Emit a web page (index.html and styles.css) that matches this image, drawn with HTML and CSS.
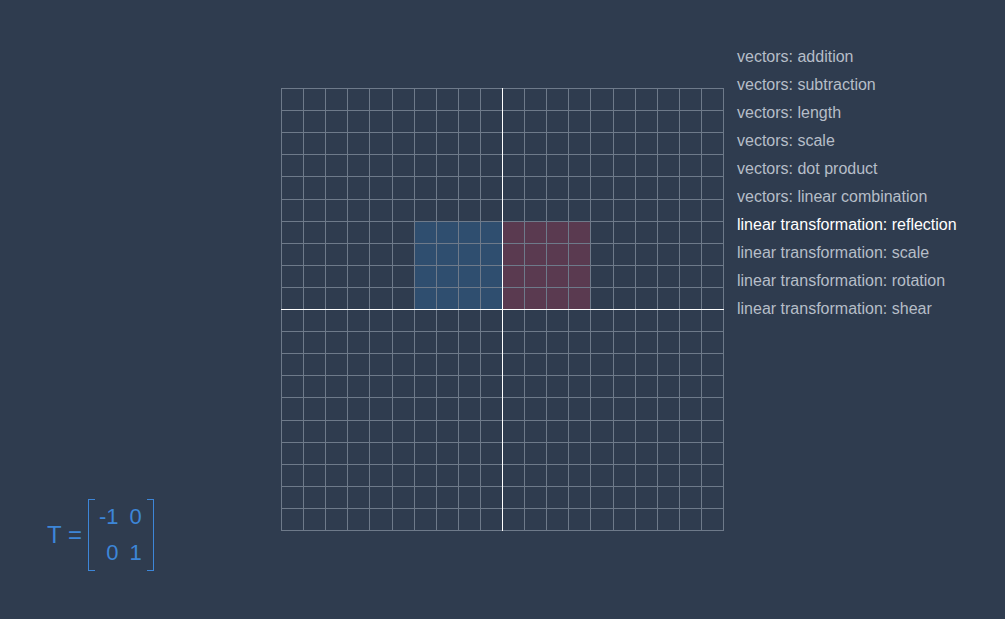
FILE: index.html
```html
<!DOCTYPE html>
<html>
<head>
<meta charset="utf-8">
<link rel="stylesheet" href="styles.css">
</head>
<body>
<div class="app">
  <aside class="side">
    <div class="formula">
      <span class="lhs">T =</span>
      <div class="matrix">
        <span class="br br-l"></span>
        <div class="cells">
          <span>-1</span><span>0</span>
          <span>0</span><span>1</span>
        </div>
        <span class="br br-r"></span>
      </div>
    </div>
  </aside>
  <main class="stage">
    <svg class="plane" width="443" height="443" viewBox="0 0 443 443" id="plane">
      <rect x="133" y="133" width="88" height="88" fill="#2f4e6f"/>
      <rect x="221" y="133" width="88" height="88" fill="#5a3a50"/>
      <g id="grid" stroke="#6e7a8a" stroke-width="1" shape-rendering="crispEdges"></g>
      <line x1="221.5" y1="0" x2="221.5" y2="443" stroke="#ffffff" stroke-width="1" shape-rendering="crispEdges"/>
      <line x1="0" y1="221.5" x2="443" y2="221.5" stroke="#ffffff" stroke-width="1" shape-rendering="crispEdges"/>
    </svg>
  </main>
  <nav class="menu">
    <a class="item">vectors: addition</a>
    <a class="item">vectors: subtraction</a>
    <a class="item">vectors: length</a>
    <a class="item">vectors: scale</a>
    <a class="item">vectors: dot product</a>
    <a class="item">vectors: linear combination</a>
    <a class="item active">linear transformation: reflection</a>
    <a class="item">linear transformation: scale</a>
    <a class="item">linear transformation: rotation</a>
    <a class="item">linear transformation: shear</a>
  </nav>
</div>
<script>
  var g = document.getElementById('grid');
  var ns = 'http://www.w3.org/2000/svg';
  for (var i = 0; i <= 20; i++) {
    var p = Math.round(i * 22.1) + 0.5;
    var v = document.createElementNS(ns, 'line');
    v.setAttribute('x1', p); v.setAttribute('x2', p);
    v.setAttribute('y1', 0); v.setAttribute('y2', 443);
    g.appendChild(v);
    var h = document.createElementNS(ns, 'line');
    h.setAttribute('y1', p); h.setAttribute('y2', p);
    h.setAttribute('x1', 0); h.setAttribute('x2', 443);
    g.appendChild(h);
  }
</script>
</body>
</html>
```

FILE: styles.css
```css
html, body {
  margin: 0;
  padding: 0;
  background: #2f3c4f;
  font-family: "Liberation Sans", Arial, sans-serif;
}
.app {
  display: flex;
  align-items: flex-start;
  width: 1005px;
  height: 619px;
  overflow: hidden;
}
.side {
  width: 281px;
  height: 619px;
  display: flex;
  flex-direction: column;
  justify-content: flex-end;
}
.formula {
  display: flex;
  align-items: center;
  padding-left: 47px;
  padding-bottom: 48px;
  color: #3d86d8;
}
.lhs {
  font-size: 24px;
  margin-right: 6px;
}
.matrix {
  display: flex;
  align-items: stretch;
  height: 72px;
}
.br {
  width: 6px;
  border: 1px solid #3d86d8;
}
.br-l { border-right: none; }
.br-r { border-left: none; }
.cells {
  display: grid;
  grid-template-columns: auto auto;
  justify-items: end;
  align-content: center;
  column-gap: 11px;
  row-gap: 12px;
  padding: 0 5px 0 4px;
  font-size: 22px;
  line-height: 24px;
}
.stage {
  margin-top: 88px;
}
.plane {
  display: block;
}
.menu {
  display: flex;
  flex-direction: column;
  margin-top: 43px;
  margin-left: 13px;
}
.item {
  font-size: 16px;
  line-height: 28px;
  color: #b6bec8;
  white-space: nowrap;
}
.item.active {
  color: #ffffff;
}
```
